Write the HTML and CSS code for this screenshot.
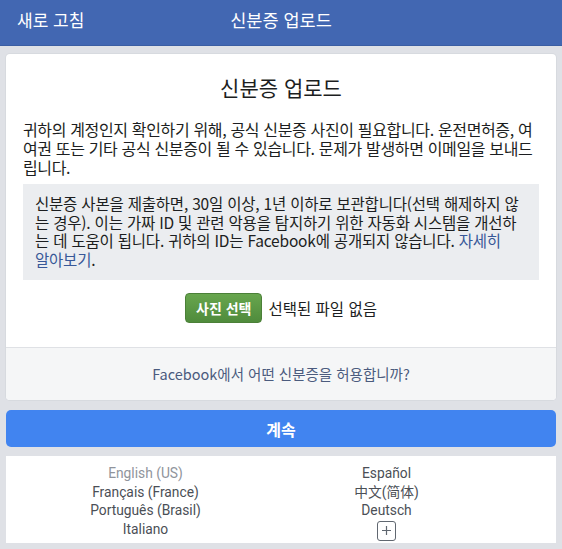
FILE: index.html
```html
<!DOCTYPE html>
<html lang="ko">
<head>
<meta charset="utf-8">
<title>신분증 업로드</title>
<link rel="stylesheet" href="styles.css">
</head>
<body>
<header class="topbar">
  <a class="topbar-left">새로 고침</a>
  <div class="topbar-title">신분증 업로드</div>
  <div class="topbar-right"></div>
</header>
<main class="page">
  <section class="card">
    <div class="card-body">
      <h1 class="title">신분증 업로드</h1>
      <p class="intro">귀하의 계정인지 확인하기 위해, 공식 신분증 사진이 필요합니다. 운전면허증, 여 여권 또는 기타 공식 신분증이 될 수 있습니다. 문제가 발생하면 이메일을 보내드립니다.</p>
      <div class="notice">신분증 사본을 제출하면, 30일 이상, 1년 이하로 보관합니다(선택 해제하지 않는 경우). 이는 가짜 ID 및 관련 악용을 탐지하기 위한 자동화 시스템을 개선하는 데 도움이 됩니다. 귀하의 ID는 Facebook에 공개되지 않습니다. <a class="link">자세히 알아보기</a>.</div>
      <div class="upload">
        <span class="choose-btn">사진 선택</span>
        <span class="no-file">선택된 파일 없음</span>
      </div>
    </div>
    <div class="card-foot">Facebook에서 어떤 신분증을 허용합니까?</div>
  </section>
  <div class="continue">계속</div>
  <section class="langs">
    <div class="lang-col">
      <span class="lang current">English (US)</span>
      <span class="lang">Français (France)</span>
      <span class="lang">Português (Brasil)</span>
      <span class="lang">Italiano</span>
    </div>
    <div class="lang-col">
      <span class="lang">Español</span>
      <span class="lang" lang="zh-CN">中文(简体)</span>
      <span class="lang">Deutsch</span>
      <span class="more"><svg width="11" height="11" viewBox="0 0 11 11"><path d="M5.5 1v9M1 5.5h9" stroke="#606770" stroke-width="1.2" fill="none"/></svg></span>
    </div>
  </section>
</main>
</body>
</html>
```
FILE: styles.css
```css
html, body {
  margin: 0;
  padding: 0;
}
body {
  background: #dfe1e6;
  font-family: "Noto Sans CJK KR", sans-serif;
  color: #1c1e21;
  width: 562px;
  height: 549px;
  overflow: hidden;
}
.topbar {
  height: 46px;
  background: #4267b2;
  border-bottom: 1px solid #3b5ea3;
  display: grid;
  grid-template-columns: 1fr auto 1fr;
  align-items: center;
  padding: 0 17px 6px;
  box-sizing: border-box;
  color: #fff;
}
.topbar-left {
  color: #fff;
  font-size: 17px;
}
.topbar-title {
  font-size: 17.5px;
}
.page {
  padding: 8px 6px 0;
  display: flex;
  flex-direction: column;
  gap: 10px;
}
.card {
  background: #fff;
  border-radius: 4px;
  overflow: hidden;
  box-shadow: 0 0 0 1px #d7dadf;
}
.card-body {
  padding: 20px 17px 24px;
}
.title {
  margin: 0;
  font-size: 21px;
  line-height: 26px;
  font-weight: 400;
  text-align: center;
}
.intro {
  margin: 20px 0 0;
  font-size: 16px;
  line-height: 19px;
  letter-spacing: -0.35px;
}
.notice {
  margin-top: 7px;
  background: #ebedf0;
  padding: 10px 10px 12px 12px;
  font-size: 15.5px;
  line-height: 18.5px;
  letter-spacing: -0.2px;
}
.link {
  color: #385898;
  word-break: keep-all;
}
.upload {
  margin-top: 13px;
  display: flex;
  justify-content: center;
  align-items: center;
  gap: 6px;
}
.choose-btn {
  height: 30px;
  padding: 0 10px;
  box-sizing: border-box;
  display: flex;
  align-items: center;
  background: linear-gradient(#68a64e, #4f8b3c);
  border: 1px solid #4b8038;
  border-radius: 4px;
  color: #fff;
  font-weight: 700;
  font-size: 14px;
}
.no-file {
  font-size: 15.5px;
}
.card-foot {
  border-top: 1px solid #dfe1e5;
  background: #f5f6f7;
  height: 53px;
  box-sizing: border-box;
  display: flex;
  align-items: center;
  justify-content: center;
  color: #4b5b7e;
  font-size: 14.5px;
  padding-bottom: 2px;
}
.continue {
  height: 37px;
  background: #4184f0;
  border-radius: 5px;
  color: #fff;
  font-weight: 700;
  font-size: 16px;
  display: flex;
  align-items: center;
  justify-content: center;
}
.langs {
  margin-top: -1px;
  background: #fff;
  height: 87px;
  box-sizing: border-box;
  padding: 8px 0 0 19px;
  display: grid;
  grid-template-columns: 241px 241px;
  font-family: Roboto, "Noto Sans CJK KR", sans-serif;
  font-size: 13.8px;
  line-height: 18.5px;
  color: #4b4f56;
}
.lang-col {
  display: flex;
  flex-direction: column;
  align-items: center;
}
.lang.current { color: #90949c; }
.lang[lang="zh-CN"] { font-family: Roboto, "Noto Sans CJK SC", sans-serif; }
.more {
  margin-top: 1px;
  width: 19px;
  height: 20px;
  box-sizing: border-box;
  border: 1px solid #606770;
  border-radius: 3px;
  display: flex;
  align-items: center;
  justify-content: center;
}
```
